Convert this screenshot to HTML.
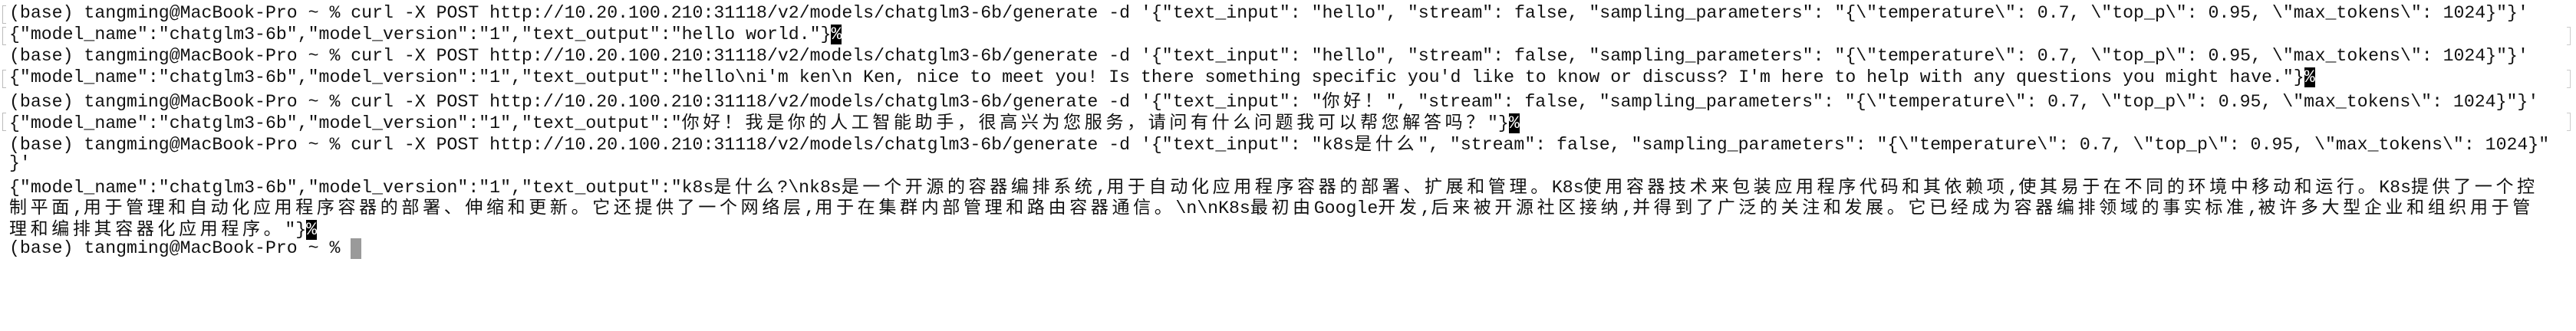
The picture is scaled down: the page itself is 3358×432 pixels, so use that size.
<!DOCTYPE html>
<html><head><meta charset="utf-8">
<style>
html,body{margin:0;padding:0;background:#fff;}
body{width:3358px;height:432px;overflow:hidden;position:relative;}
#t{position:absolute;left:12px;top:4.4px;font-family:"Liberation Mono","Noto Sans CJK SC",monospace;font-size:23.2px;line-height:27.9px;color:#111;}
.l{height:27.9px;white-space:pre;overflow:visible;}
.c{font-family:"Noto Sans CJK SC","WenQuanYi Zen Hei",sans-serif;letter-spacing:4.64px;font-size:23px;line-height:27.9px;}
.p{background:#000;color:#fff;}
.cur{display:inline-block;width:13.9px;height:27px;background:#9a9a9a;vertical-align:top;}
.bl{position:absolute;left:3px;width:4px;height:22px;border:1.5px solid #bbb;border-right:none;}
.br{position:absolute;right:7px;width:4px;height:22px;border:1.5px solid #ccc;border-left:none;}
</style></head><body>
<div class="bl" style="top:7px"></div>
<div class="bl" style="top:35px"></div>
<div class="bl" style="top:91px"></div>
<div class="bl" style="top:147px"></div>
<div class="br" style="top:35px"></div>
<div class="br" style="top:91px"></div>
<div class="br" style="top:147px"></div>
<div id="t">
<div class="l">(base) tangming@MacBook-Pro ~ % curl -X POST http://10.20.100.210:31118/v2/models/chatglm3-6b/generate -d '{"text_input": "hello", "stream": false, "sampling_parameters": "{\"temperature\": 0.7, \"top_p\": 0.95, \"max_tokens\": 1024}"}'</div>
<div class="l">{"model_name":"chatglm3-6b","model_version":"1","text_output":"hello world."}<span class="p">%</span></div>
<div class="l">(base) tangming@MacBook-Pro ~ % curl -X POST http://10.20.100.210:31118/v2/models/chatglm3-6b/generate -d '{"text_input": "hello", "stream": false, "sampling_parameters": "{\"temperature\": 0.7, \"top_p\": 0.95, \"max_tokens\": 1024}"}'</div>
<div class="l">{"model_name":"chatglm3-6b","model_version":"1","text_output":"hello\ni'm ken\n Ken, nice to meet you! Is there something specific you'd like to know or discuss? I'm here to help with any questions you might have."}<span class="p">%</span></div>
<div class="l">(base) tangming@MacBook-Pro ~ % curl -X POST http://10.20.100.210:31118/v2/models/chatglm3-6b/generate -d '{"text_input": "<span class="c">你好！</span>", "stream": false, "sampling_parameters": "{\"temperature\": 0.7, \"top_p\": 0.95, \"max_tokens\": 1024}"}'</div>
<div class="l">{"model_name":"chatglm3-6b","model_version":"1","text_output":"<span class="c">你好！我是你的人工智能助手，很高兴为您服务，请问有什么问题我可以帮您解答吗？</span>"}<span class="p">%</span></div>
<div class="l">(base) tangming@MacBook-Pro ~ % curl -X POST http://10.20.100.210:31118/v2/models/chatglm3-6b/generate -d '{"text_input": "k8s<span class="c">是什么</span>", "stream": false, "sampling_parameters": "{\"temperature\": 0.7, \"top_p\": 0.95, \"max_tokens\": 1024}"</div>
<div class="l">}'</div>
<div class="l">{"model_name":"chatglm3-6b","model_version":"1","text_output":"k8s<span class="c">是什么</span>?\nk8s<span class="c">是一个开源的容器编排系统</span>,<span class="c">用于自动化应用程序容器的部署、扩展和管理。</span>K8s<span class="c">使用容器技术来包装应用程序代码和其依赖项</span>,<span class="c">使其易于在不同的环境中移动和运行。</span>K8s<span class="c">提供了一个控</span></div>
<div class="l"><span class="c">制平面</span>,<span class="c">用于管理和自动化应用程序容器的部署、伸缩和更新。它还提供了一个网络层</span>,<span class="c">用于在集群内部管理和路由容器通信。</span>\n\nK8s<span class="c">最初由</span>Google<span class="c">开发</span>,<span class="c">后来被开源社区接纳</span>,<span class="c">并得到了广泛的关注和发展。它已经成为容器编排领域的事实标准</span>,<span class="c">被许多大型企业和组织用于管</span></div>
<div class="l"><span class="c">理和编排其容器化应用程序。</span>"}<span class="p">%</span></div>
<div class="l">(base) tangming@MacBook-Pro ~ % <span class="cur"></span></div>
</div>
</body></html>
